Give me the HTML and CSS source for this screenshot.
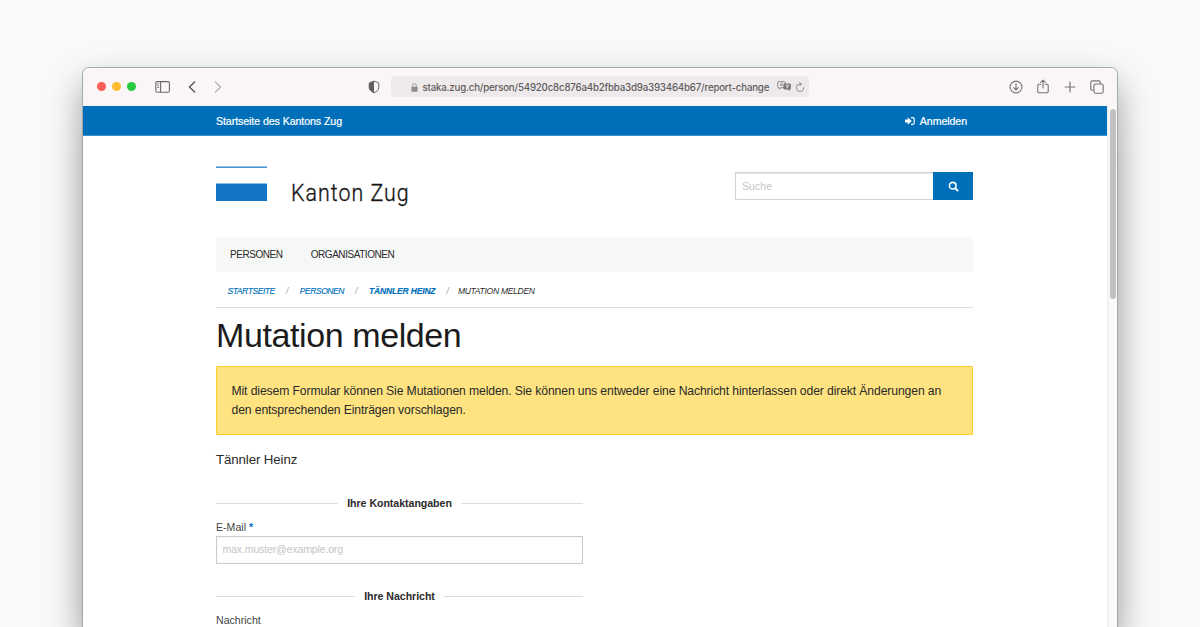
FILE: index.html
```
<!DOCTYPE html>
<html lang="de">
<head>
<meta charset="utf-8">
<title>Mutation melden</title>
<link rel="stylesheet" href="styles.css">
</head>
<body>
<div class="window">
  <header class="toolbar">
    <div class="lights"><i class="light red"></i><i class="light yellow"></i><i class="light green"></i></div>
    <svg class="sidebar-icon" width="16" height="12" viewBox="0 0 16 12" fill="none" stroke="#6d696a" stroke-width="1.1"><rect x=".8" y=".6" width="13.6" height="10.6" rx="1.4"/><path d="M5.6 .6v10.6"/><path d="M2.2 2.9h2M2.2 4.7h2M2.2 6.5h2" stroke-width=".8"/></svg>
    <svg class="back-icon" width="8" height="12" viewBox="0 0 8 12" fill="none" stroke="#555152" stroke-width="1.3" stroke-linecap="round" stroke-linejoin="round"><path d="M6.6 1 1.4 6l5.2 5"/></svg>
    <svg class="forward-icon" width="8" height="12" viewBox="0 0 8 12" fill="none" stroke="#b4b0b1" stroke-width="1.2" stroke-linecap="round" stroke-linejoin="round"><path d="M1.4 1l5.2 5-5.2 5"/></svg>
    <svg class="shield-icon" width="12" height="14" viewBox="0 0 12 14"><path d="M6 1.2 10.3 2.7q.5.2.5.8v4.1c0 2.4-2.4 4.1-4.8 5.2C3.600 11.700 1.200 10 1.200 7.600V3.500q0-.6.5-.8Z" fill="none" stroke="#625e5f" stroke-width="1"/><path d="M6 1.200 1.700 2.700q-.5.200-.5.800v4.100c0 2.400 2.400 4.100 4.800 5.200Z" fill="#625e5f"/></svg>
    <div class="address">
      <svg class="lock-icon" width="7" height="9" viewBox="0 0 7 9"><rect x=".4" y="3.800" width="6.200" height="4.900" rx=".8" fill="#918d8e"/><path d="M1.700 4V2.500a1.800 1.800 0 0 1 3.600 0V4" fill="none" stroke="#918d8e" stroke-width=".9"/></svg>
      <span class="url">staka.zug.ch/person/54920c8c876a4b2fbba3d9a393464b67/report-change</span>
      <svg class="translate-icon" width="15" height="11" viewBox="0 0 15 11" fill="none"><path d="M1.700.7h5.600q1 0 1 1v4q0 1-1 1H4L2.300 8.200V6.700H1.700q-1 0-1-1v-4q0-1 1-1Z" stroke="#858182" stroke-width=".9"/><path d="M3 5.200 4.600 1.800 6 5.200M3.500 4.100h2" stroke="#858182" stroke-width=".7"/><path d="M7.500 2.400h5.400q1 0 1 1v4q0 1-1 1h-.5v1.700l-1.800-1.700H7.500q-1 0-1-1v-4q0-1 1-1Z" fill="#777374"/><path d="M8.300 4.300h4M10.300 3.500v.8M9 7.200c1.300-.6 2.200-1.500 2.400-2.900M9.200 4.900c.5 1.200 1.300 1.900 2.500 2.300" stroke="#eeeaeb" stroke-width=".7"/></svg>
      <svg class="reload-icon" width="10" height="11" viewBox="0 0 10 11" fill="none" stroke="#858182" stroke-width=".9" stroke-linecap="round"><path d="M8.700 5.600A3.700 3.700 0 1 1 5 2h1.300M4.600.6 6.400 2 4.800 3.700"/></svg>
    </div>
    <div class="actions">
      <svg width="14" height="14" viewBox="0 0 14 14" fill="none" stroke="#777374" stroke-width="1.100" stroke-linecap="round" stroke-linejoin="round"><circle cx="7" cy="7" r="5.900"/><path d="M7 3.900v6M4.700 7.700l2.300 2.300 2.300-2.300"/></svg>
      <svg width="12" height="15" viewBox="0 0 12 15" fill="none" stroke="#777374" stroke-width="1.100" stroke-linecap="round" stroke-linejoin="round"><path d="M3.700 5.300H2q-1.200 0-1.200 1.200v6q0 1.300 1.200 1.300h8q1.200 0 1.200-1.300v-6q0-1.200-1.200-1.200H8.300M6 9V1.200M3.700 3.400 6 1.100l2.300 2.300"/></svg>
      <svg width="12" height="12" viewBox="0 0 12 12" stroke="#777374" stroke-width="1.200" stroke-linecap="round"><path d="M6 1.200v9.600M1.200 6h9.600"/></svg>
      <svg width="14" height="14" viewBox="0 0 14 14" fill="none" stroke="#777374" stroke-width="1.100"><rect x="3.900" y="4" width="9.300" height="9.200" rx="1.600"/><path d="M3.700 10.300H2.400Q.8 10.300.8 8.700V2.500Q.8.900 2.400.9h6.300q1.600 0 1.600 1.600V4"/></svg>
    </div>
  </header>
  <div class="viewport">
    <main class="page">
      <div class="topbar"><div class="inner topbar-inner">
        <a class="home">Startseite des Kantons Zug</a>
        <a class="login"><svg width="10" height="8" viewBox="0 0 10 8" fill="#fff"><path d="M0 2.600h2.800V.3L6.800 4 2.800 7.700V5.400H0Z"/><path d="M6 .7h1.700q1.500 0 1.500 1.500v3.600q0 1.500-1.500 1.500H6" fill="none" stroke="#fff" stroke-width="1.200"/></svg><span>Anmelden</span></a>
      </div></div>
      <div class="inner">
        <div class="brand-row">
          <div class="brand"><div class="flag"><i class="flag-line"></i><i class="flag-block"></i></div><span class="brand-name">Kanton Zug</span></div>
          <div class="search"><div class="search-field">Suche</div><div class="search-button"><svg width="11" height="11" viewBox="0 0 11 11" fill="none" stroke="#fff" stroke-width="1.600"><circle cx="4.700" cy="4.700" r="3.300"/><path d="m7.200 7.200 2.800 2.800" stroke-width="1.900"/></svg></div></div>
        </div>
        <nav class="nav"><a>PERSONEN</a><a>ORGANISATIONEN</a></nav>
        <div class="crumbs"><a class="c1">STARTSEITE</a><i class="sep">/</i><a class="c2">PERSONEN</a><i class="sep">/</i><a class="c3">TÄNNLER HEINZ</a><i class="sep last">/</i><span class="c4">MUTATION MELDEN</span></div>
        <h1 class="title">Mutation melden</h1>
        <div class="callout">Mit diesem Formular können Sie Mutationen melden. Sie können uns entweder eine Nachricht hinterlassen oder direkt Änderungen an<br>den entsprechenden Einträgen vorschlagen.</div>
        <div class="person">Tännler Heinz</div>
        <div class="form">
          <div class="group"><span>Ihre Kontaktangaben</span></div>
          <div class="label">E-Mail <b class="required">*</b></div>
          <div class="email">max.muster@example.org</div>
          <div class="group group-message"><span>Ihre Nachricht</span></div>
          <div class="label">Nachricht</div>
        </div>
      </div>
    </main>
    <div class="scrollbar"><div class="thumb"></div></div>
  </div>
</div>
</body>
</html>
```
FILE: styles.css
```
* { box-sizing: border-box; }
html, body { height: 100%; }
body { margin: 0; background: #f8f9fb; overflow: hidden; font-family: "Liberation Sans", Arial, sans-serif; color: #2a2a2a; padding: 68px 83px 0; }
svg { display: block; flex: none; }
.window { height: 559px; background: #fff; border-radius: 6px 6px 0 0; overflow: hidden; box-shadow: 0 0 0 1px #a5a8a8, 0 50px 0 0 #fff, 0 16px 34px rgba(0,0,0,.38), 0 60px 34px rgba(0,0,0,.06); }
.toolbar { height: 38px; background: #faf6f7; display: flex; align-items: center; padding: 0 13px 1px 14px; box-shadow: inset 0 1px #fff; }
.lights { display: flex; gap: 6px; margin-right: 19px; }
.light { width: 9px; height: 9px; border-radius: 50%; }
.red { background: #ff5f57; }
.yellow { background: #febc2e; }
.green { background: #28c840; }
.sidebar-icon { margin-right: -1px; }
.back-icon { margin-left: 18px; }
.forward-icon { margin-left: 18px; }
.shield-icon { margin-left: 146px; }
.address { margin-left: 11px; width: 418px; height: 21px; border-radius: 4px; background: #eeeaeb; display: flex; align-items: center; padding: 1px 0 0 20px; }
.url { width: 347px; margin-left: 4.5px; font: 500 9.7px/20px Inter, sans-serif; letter-spacing: -.18px; color: #5f5b5c; white-space: nowrap; padding-top: 1px; }
.translate-icon { margin: 0 0 1px 7.5px; }
.reload-icon { margin-left: 3px; }
.actions { display: flex; align-items: center; gap: 14.3px; margin-left: auto; }
.viewport { display: flex; height: 521px; }
.page { flex: 1; background: #fff; height: 521px; overflow: hidden; }
.scrollbar { width: 10px; background: #fafafa; border-left: 2px solid #f1f1f1; padding: 3px 1px 0 1px; }
.thumb { width: 6px; height: 190px; border-radius: 3px; background: #c1c1c1; }
.topbar { height: 30px; background: #006fba; border-bottom: 1px solid #3d91ca; }
.inner { width: 757px; margin-left: 133px; }
.topbar-inner { display: flex; justify-content: space-between; align-items: center; height: 29px; padding-right: 6px; color: #fff; font-size: 10.6px; letter-spacing: -.07px; -webkit-text-stroke: .2px #fff; }
.login { display: flex; align-items: center; gap: 5px; }
.brand-row { display: flex; justify-content: space-between; height: 101px; padding-top: 30px; }
.brand { display: flex; }
.flag { width: 51px; }
.flag-line { display: block; height: 2px; border-top: 1px solid #92c1e5; background: #4a91cd; }
.flag-block { display: block; height: 18px; margin-top: 15px; background: #1275c7; border-top: 1px solid #8abce4; }
.brand-name { margin: 11px 0 0 23.5px; font: 300 24px/32px Roboto, sans-serif; letter-spacing: 1.15px; color: #151515; -webkit-text-stroke: .35px #151515; white-space: nowrap; transform: scaleX(.89); transform-origin: left; }
.search { display: flex; margin-top: 6px; height: 28px; }
.search-field { width: 198px; border: 1px solid #d2d2d2; border-right: 0; font-size: 10.6px; line-height: 26px; padding-left: 6px; color: #c5c5c5; box-shadow: inset 0 1px 1px #e5e5e5; }
.search-button { width: 40px; background: #006fba; display: grid; place-items: center; padding-top: 1px; }
.nav { height: 35px; background: #f6f8f7; display: flex; align-items: center; padding: 0 0 0 14px; gap: 28.2px; font-size: 10px; letter-spacing: -.45px; }
.crumbs { height: 36px; border-bottom: 1px solid #dedede; display: flex; align-items: center; padding: 2px 0 0 11.5px; font-size: 8.5px; font-style: italic; white-space: nowrap; }
.crumbs a { color: #006fba; -webkit-text-stroke: .15px #006fba; }
.sep { width: 2px; color: #999; margin: 0 11.8px 0 11.1px; }
.sep.last { margin: 0 9.5px 0 11px; }
.c1, .c2 { letter-spacing: -.43px; }
.crumbs .c3 { font-weight: bold; letter-spacing: -.15px; }
.c4 { letter-spacing: -.28px; }
.title { margin: 4px 0 0; font-size: 34px; line-height: 46px; font-weight: 400; letter-spacing: -.4px; color: #1c1c1c; }
.callout { height: 69px; margin-top: 8px; background: #ffe381; border: 1px solid #fbcc2c; border-radius: 1px; padding: 15px 14.5px; font-size: 12.2px; line-height: 19px; letter-spacing: -.12px; white-space: nowrap; }
.person { font-size: 13.3px; line-height: 20px; margin-top: 15px; letter-spacing: -.12px; }
.form { width: 367px; margin-top: 23px; }
.group { display: flex; align-items: center; gap: 9px; height: 20px; font-size: 10.6px; letter-spacing: -.04px; font-weight: bold; }
.group::before, .group::after { content: ""; flex: 1; height: 1px; background: #ddd; }
.label { font-size: 10.6px; line-height: 14px; margin-top: 7px; color: #444; }
.required { color: #006fba; }
.email { height: 28px; margin-top: 2px; border: 1px solid #ccc; box-shadow: inset 0 0 1px #ccc; padding-left: 5.5px; color: #c5c5c5; font-size: 10.6px; letter-spacing: -.18px; line-height: 25px; }
.group-message { margin-top: 22px; }
```
